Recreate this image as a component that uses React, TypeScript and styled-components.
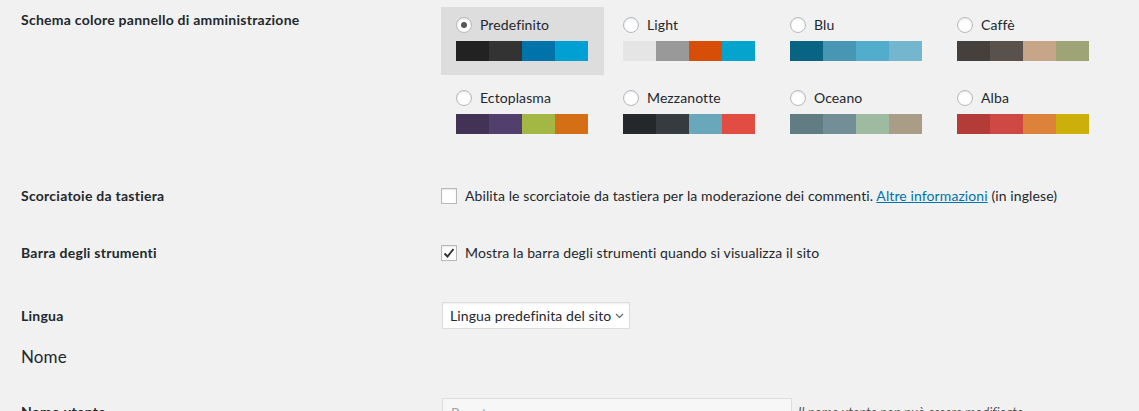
import styled, { createGlobalStyle } from "styled-components";

const GlobalStyle = createGlobalStyle`
  html, body {
    margin: 0;
    padding: 0;
    background: #f1f1f1;
    overflow: hidden;
  }
  body {
    font-family: Lato, "Open Sans", sans-serif;
    font-size: 14px;
    letter-spacing: 0.1px;
    color: #23282d;
  }
`;

const schemes = [
  { name: "Predefinito", colors: ["#222", "#333", "#0073aa", "#00a0d2"] },
  { name: "Light", colors: ["#e5e5e5", "#999", "#d64e07", "#04a4cc"] },
  { name: "Blu", colors: ["#096484", "#4796b3", "#52accc", "#74b6ce"] },
  { name: "Caffè", colors: ["#46403c", "#59524c", "#c7a589", "#9ea476"] },
  { name: "Ectoplasma", colors: ["#413256", "#523f6d", "#a3b745", "#d46f15"] },
  { name: "Mezzanotte", colors: ["#25282b", "#363b3f", "#69a8bb", "#e14d43"] },
  { name: "Oceano", colors: ["#627c83", "#738e96", "#9ebaa0", "#aa9d88"] },
  { name: "Alba", colors: ["#b43c38", "#cf4944", "#dd823b", "#ccaf0b"] },
];

const Page = styled.div`
  padding: 0 21px;
`;

const Row = styled.div<{ $top: number; $start?: boolean }>`
  display: grid;
  grid-template-columns: 420px 1fr;
  align-items: ${(p) => (p.$start ? "start" : "center")};
  margin-top: ${(p) => p.$top}px;
`;

const Label = styled.div<{ $pad?: number }>`
  font-weight: 700;
  font-size: 14px;
  letter-spacing: 0.25px;
  line-height: 20px;
  padding-top: ${(p) => p.$pad || 0}px;
`;

const SchemeGrid = styled.div`
  display: grid;
  grid-template-columns: repeat(4, 163px);
  column-gap: 4px;
  row-gap: 5px;
  margin-top: 7px;
`;

const SchemeOption = styled.div<{ $selected?: boolean }>`
  height: 68px;
  box-sizing: border-box;
  padding: 5px 15px 14px;
  background: ${(p) => (p.$selected ? "#dddddd" : "transparent")};
`;

const OptionLabel = styled.div`
  display: flex;
  align-items: center;
  gap: 8px;
  height: 26px;
  line-height: 20px;
`;

const Radio = styled.span<{ $checked?: boolean }>`
  width: 16px;
  height: 16px;
  box-sizing: border-box;
  border-radius: 50%;
  border: 1px solid #b4b9be;
  background: #fff;
  box-shadow: inset 0 1px 2px rgba(0, 0, 0, 0.1);
  display: flex;
  align-items: center;
  justify-content: center;
  flex-shrink: 0;

  &::before {
    content: "";
    width: 6px;
    height: 6px;
    border-radius: 50%;
    background: #555;
    display: ${(p) => (p.$checked ? "block" : "none")};
  }
`;

const Swatches = styled.div`
  display: flex;
  margin-top: 3px;
`;

const Swatch = styled.span<{ $color: string }>`
  width: 33px;
  height: 20px;
  background: ${(p) => p.$color};
`;

const CheckLine = styled.div`
  display: flex;
  align-items: center;
  gap: 8px;
  line-height: 20px;
`;

const Checkbox = styled.span`
  width: 16px;
  height: 16px;
  box-sizing: border-box;
  border: 1px solid #b4b9be;
  background: #fff;
  box-shadow: inset 0 1px 2px rgba(0, 0, 0, 0.1);
  display: flex;
  align-items: center;
  justify-content: center;
  flex-shrink: 0;
`;

const Link = styled.a`
  color: #0073aa;
  text-decoration: underline;
`;

const SelectBox = styled.div`
  display: inline-flex;
  align-items: center;
  justify-self: start;
  height: 27px;
  box-sizing: border-box;
  padding: 0 5px 0 7px;
  gap: 4px;
  background: #fff;
  border: 1px solid #ddd;
  box-shadow: inset 0 1px 2px rgba(0, 0, 0, 0.07);
  margin-left: 1px;
`;

const Heading = styled.h2`
  margin: 17px 0 0;
  font-size: 17px;
  font-weight: 400;
  line-height: 22px;
`;

const FieldLine = styled.div`
  display: flex;
  align-items: center;
  gap: 6px;
`;

const TextInput = styled.div`
  width: 350px;
  height: 28px;
  box-sizing: border-box;
  margin-left: 1px;
  padding: 0 8px;
  display: flex;
  align-items: center;
  background: #f7f7f7;
  border: 1px solid #ddd;
  color: #a0a5aa;
`;

const Description = styled.span`
  font-style: italic;
  font-size: 13px;
  color: #555;
`;

function CheckMark() {
  return (
    <svg width="12" height="12" viewBox="0 0 12 12">
      <path d="M1.5 6.5 L4.5 9.5 L10.5 2" fill="none" stroke="#333" strokeWidth="2" />
    </svg>
  );
}

function Chevron() {
  return (
    <svg width="9" height="6" viewBox="0 0 9 6">
      <path d="M1 1 L4.5 4.5 L8 1" fill="none" stroke="#666" strokeWidth="1.2" />
    </svg>
  );
}

export default function App() {
  return (
    <>
      <GlobalStyle />
      <Page>
        <Row $top={0} $start>
          <Label $pad={10}>Schema colore pannello di amministrazione</Label>
          <SchemeGrid>
            {schemes.map((s, i) => (
              <SchemeOption key={s.name} $selected={i === 0}>
                <OptionLabel>
                  <Radio $checked={i === 0} />
                  {s.name}
                </OptionLabel>
                <Swatches>
                  {s.colors.map((c) => (
                    <Swatch key={c} $color={c} />
                  ))}
                </Swatches>
              </SchemeOption>
            ))}
          </SchemeGrid>
        </Row>

        <Row $top={38}>
          <Label>Scorciatoie da tastiera</Label>
          <CheckLine>
            <Checkbox />
            <span>
              Abilita le scorciatoie da tastiera per la moderazione dei commenti.{" "}
              <Link href="#">Altre informazioni</Link> (in inglese)
            </span>
          </CheckLine>
        </Row>

        <Row $top={37}>
          <Label>Barra degli strumenti</Label>
          <CheckLine>
            <Checkbox>
              <CheckMark />
            </Checkbox>
            <span>Mostra la barra degli strumenti quando si visualizza il sito</span>
          </CheckLine>
        </Row>

        <Row $top={39}>
          <Label>Lingua</Label>
          <SelectBox>
            Lingua predefinita del sito
            <Chevron />
          </SelectBox>
        </Row>

        <Heading>Nome</Heading>

        <Row $top={30}>
          <Label>Nome utente</Label>
          <FieldLine>
            <TextInput>Renato</TextInput>
            <Description>Il nome utente non può essere modificato.</Description>
          </FieldLine>
        </Row>
      </Page>
    </>
  );
}
